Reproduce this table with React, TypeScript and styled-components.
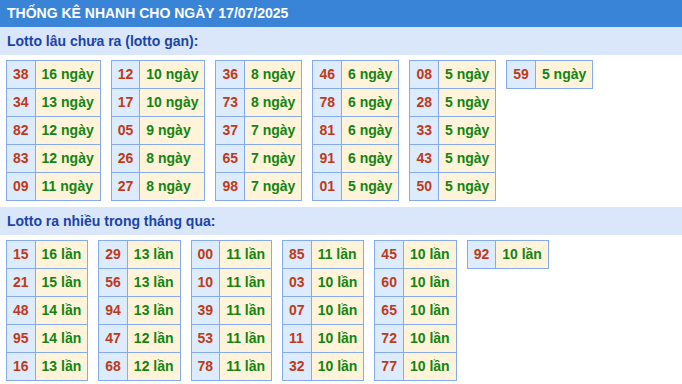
import styled, { createGlobalStyle } from 'styled-components';

const GlobalStyle = createGlobalStyle`
  html, body {
    margin: 0;
    padding: 0;
    background: #ffffff;
  }
  body {
    font-family: 'Liberation Sans', Arial, sans-serif;
  }
`;

const Page = styled.div`
  width: 682px;
  font-weight: bold;
  font-size: 14px;
`;

const Title = styled.div`
  height: 27px;
  line-height: 27px;
  padding-left: 7px;
  background: #3a84d8;
  color: #ffffff;
  white-space: nowrap;
`;

const SectionBar = styled.div`
  height: 28px;
  line-height: 28px;
  padding-left: 7px;
  background: #dae7fa;
  color: #1a44a8;
`;

const Grid = styled.div<{ $gap: number }>`
  display: flex;
  align-items: flex-start;
  gap: ${(p) => p.$gap}px;
  padding: 5px 6px 6px;
`;

const Table = styled.table`
  border-collapse: collapse;
`;

const Cell = styled.td<{ $kind: 'num' | 'val' }>`
  border: 1px solid #86abec;
  padding: 0 6px;
  height: 27px;
  line-height: 27px;
  white-space: nowrap;
  background: ${(p) => (p.$kind === 'num' ? '#dcecfd' : '#fff4da')};
  color: ${(p) => (p.$kind === 'num' ? '#c03a1a' : '#138413')};
`;

type Entry = [string, string];

const gan: Entry[][] = [
  [['38', '16'], ['34', '13'], ['82', '12'], ['83', '12'], ['09', '11']],
  [['12', '10'], ['17', '10'], ['05', '9'], ['26', '8'], ['27', '8']],
  [['36', '8'], ['73', '8'], ['37', '7'], ['65', '7'], ['98', '7']],
  [['46', '6'], ['78', '6'], ['81', '6'], ['91', '6'], ['01', '5']],
  [['08', '5'], ['28', '5'], ['33', '5'], ['43', '5'], ['50', '5']],
  [['59', '5']],
];

const nhieu: Entry[][] = [
  [['15', '16'], ['21', '15'], ['48', '14'], ['95', '14'], ['16', '13']],
  [['29', '13'], ['56', '13'], ['94', '13'], ['47', '12'], ['68', '12']],
  [['00', '11'], ['10', '11'], ['39', '11'], ['53', '11'], ['78', '11']],
  [['85', '11'], ['03', '10'], ['07', '10'], ['11', '10'], ['32', '10']],
  [['45', '10'], ['60', '10'], ['65', '10'], ['72', '10'], ['77', '10']],
  [['92', '10']],
];

const Block = ({ cols, unit, gap }: { cols: Entry[][]; unit: string; gap: number }) => (
  <Grid $gap={gap}>
    {cols.map((col, i) => (
      <Table key={i}>
        <tbody>
          {col.map(([num, count]) => (
            <tr key={num}>
              <Cell $kind="num">{num}</Cell>
              <Cell $kind="val">
                {count} {unit}
              </Cell>
            </tr>
          ))}
        </tbody>
      </Table>
    ))}
  </Grid>
);

const App = () => (
  <>
    <GlobalStyle />
    <Page>
      <Title>THỐNG KÊ NHANH CHO NGÀY 17/07/2025</Title>
      <SectionBar>Lotto lâu chưa ra (lotto gan):</SectionBar>
      <Block cols={gan} unit="ngày" gap={10} />
      <SectionBar>Lotto ra nhiều trong tháng qua:</SectionBar>
      <Block cols={nhieu} unit="lần" gap={10} />
    </Page>
  </>
);

export default App;
